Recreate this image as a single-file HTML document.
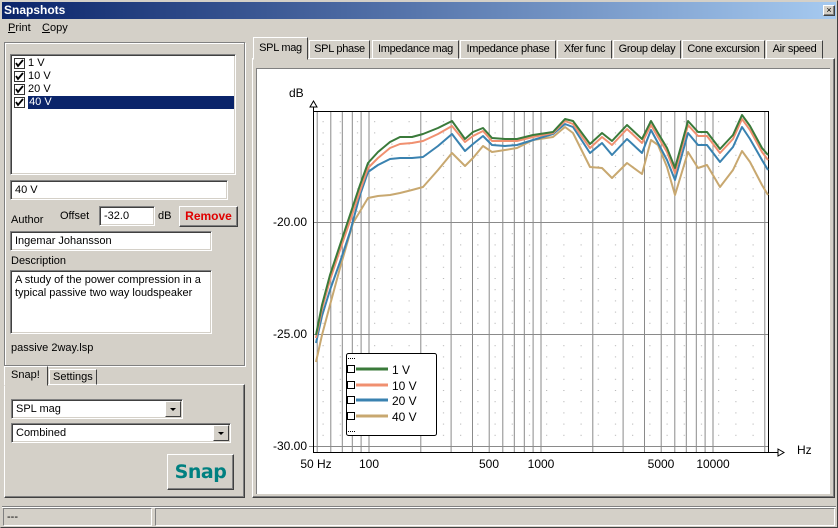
<!DOCTYPE html>
<html><head><meta charset="utf-8"><style>
*{box-sizing:border-box;margin:0;padding:0}
body{width:838px;height:528px;background:#d4d0c8;font-family:"Liberation Sans",sans-serif;font-size:11px;color:#000;position:relative;overflow:hidden}
.a{position:absolute}
.sunk{background:#fff;border:1px solid;border-color:#808080 #fff #fff #808080;box-shadow:inset 1px 1px 0 #404040,inset -1px -1px 0 #d4d0c8}
.raised{border:1px solid;border-color:#fff #404040 #404040 #fff;box-shadow:inset -1px -1px 0 #808080}
.grp{border:1px solid #808080;box-shadow:1px 1px 0 #fff,inset 1px 1px 0 #fff}
.cb{display:inline-block;width:11px;height:11px;border:1px solid #333;background:#fff;position:relative;vertical-align:middle}
.tab{position:absolute;top:40px;height:19px;border:1px solid;border-color:#fff #404040 transparent #fff;padding:2px 0 0;text-align:center;white-space:nowrap;font-size:11px;letter-spacing:-0.3px;overflow:hidden}
.dd{position:absolute;width:16px;height:16px;background:#d4d0c8;border:1px solid;border-color:#fff #404040 #404040 #fff;top:1px;right:1px}
.dd:after{content:"";position:absolute;left:4px;top:6px;border-left:3px solid transparent;border-right:3px solid transparent;border-top:3px solid #000}
</style></head><body>
<div class="a" style="left:0;top:0;width:838px;height:528px;border:1px solid;border-color:#d4d0c8 #404040 #404040 #d4d0c8"></div>
<div class="a" style="left:2px;top:2px;width:834px;height:17px;background:linear-gradient(90deg,#0a246a,#a6caf0)"></div>
<div class="a" style="left:4px;top:3px;color:#fff;font-weight:bold;font-size:12px">Snapshots</div>
<div class="a raised" style="left:823px;top:5px;width:12px;height:11px;background:#d4d0c8;font-size:9px;line-height:9px;text-align:center">×</div>
<div class="a" style="left:8px;top:22px"><u>P</u>rint</div>
<div class="a" style="left:42px;top:22px"><u>C</u>opy</div>

<div class="a grp" style="left:4px;top:42px;width:241px;height:324px"></div>
<div class="a sunk" style="left:10px;top:54px;width:226px;height:121px"></div>
<div class="a" style="left:14px;top:57px;line-height:13px">
<div><span class="cb"><svg width="9" height="9" style="position:absolute;left:0;top:0"><path d="M1 4l2 3 5-6" stroke="#000" stroke-width="1.8" fill="none"/></svg></span> 1 V</div>
<div><span class="cb"><svg width="9" height="9" style="position:absolute;left:0;top:0"><path d="M1 4l2 3 5-6" stroke="#000" stroke-width="1.8" fill="none"/></svg></span> 10 V</div>
<div><span class="cb"><svg width="9" height="9" style="position:absolute;left:0;top:0"><path d="M1 4l2 3 5-6" stroke="#000" stroke-width="1.8" fill="none"/></svg></span> 20 V</div>
<div><span class="cb"><svg width="9" height="9" style="position:absolute;left:0;top:0"><path d="M1 4l2 3 5-6" stroke="#000" stroke-width="1.8" fill="none"/></svg></span> <span style="background:#0a246a;color:#fff;display:inline-block;width:206px;padding-left:1px">40 V</span></div>
</div>
<div class="a sunk" style="left:10px;top:180px;width:218px;height:20px;padding:3px 4px">40 V</div>
<div class="a" style="left:11px;top:214px">Author</div>
<div class="a" style="left:60px;top:210px">Offset</div>
<div class="a sunk" style="left:99px;top:206px;width:56px;height:20px;padding:3px 4px">-32.0</div>
<div class="a" style="left:158px;top:210px">dB</div>
<div class="a raised" style="left:179px;top:206px;width:59px;height:21px;background:#d4d0c8;color:#e00000;font-weight:bold;font-size:12px;text-align:center;line-height:19px">Remove</div>
<div class="a sunk" style="left:10px;top:231px;width:202px;height:20px;padding:3px 4px">Ingemar Johansson</div>
<div class="a" style="left:11px;top:255px">Description</div>
<div class="a sunk" style="left:10px;top:270px;width:202px;height:64px;padding:3px 4px;line-height:13px">A study of the power compression in a typical passive two way loudspeaker</div>
<div class="a" style="left:11px;top:342px">passive 2way.lsp</div>

<div class="a raised" style="left:4px;top:384px;width:241px;height:114px;background:#d4d0c8"></div>
<div class="a" style="left:4px;top:366px;width:44px;height:20px;border:1px solid;border-color:#fff #404040 transparent #fff;background:#d4d0c8;padding:2px 6px">Snap!</div>
<div class="a" style="left:49px;top:369px;width:48px;height:16px;border:1px solid;border-color:#fff #404040 transparent #fff;padding:1px 3px">Settings</div>
<div class="a sunk" style="left:11px;top:399px;width:172px;height:20px;padding:3px 4px">SPL mag<span class="dd"></span></div>
<div class="a sunk" style="left:11px;top:423px;width:220px;height:20px;padding:3px 4px">Combined<span class="dd"></span></div>
<div class="a raised" style="left:167px;top:454px;width:67px;height:36px;background:#d4d0c8;color:#008080;font-weight:bold;font-size:19px;text-align:center;line-height:34px;font-family:'DejaVu Sans',sans-serif;letter-spacing:-0.5px">Snap</div>

<div class="a raised" style="left:252px;top:58px;width:583px;height:440px;background:#d4d0c8"></div>
<div class="a" style="left:256px;top:68px;width:574px;height:426px;background:#fff;border-top:1px solid #808080;border-left:1px solid #808080"></div>
<div class="tab" style="left:253px;top:37px;height:23px;width:55px;background:#d4d0c8;padding-top:4px">SPL mag</div>
<div class="tab" style="left:309px;width:61px">SPL phase</div>
<div class="tab" style="left:372px;width:87px">Impedance mag</div>
<div class="tab" style="left:460px;width:96px">Impedance phase</div>
<div class="tab" style="left:557px;width:55px">Xfer func</div>
<div class="tab" style="left:613px;width:68px">Group delay</div>
<div class="tab" style="left:682px;width:83px">Cone excursion</div>
<div class="tab" style="left:766px;width:57px">Air speed</div>

<svg class="a" style="left:0;top:0" width="838" height="528" font-family="Liberation Sans, sans-serif" font-size="12">
<defs><pattern id="dp" x="5" y="222" width="17.2" height="11.2" patternUnits="userSpaceOnUse"><rect x="8" y="0" width="1" height="1" fill="#aaa"/></pattern></defs>
<rect x="313" y="111" width="455" height="341" fill="url(#dp)"/>
<g stroke="#8a8a8a" stroke-width="1">
<path d="M317.2 111V452M330.8 111V452M342.3 111V452M352.3 111V452M361.1 111V452M369 111V452M420.8 111V452M451.1 111V452M472.5 111V452M489.2 111V452M502.8 111V452M514.3 111V452M524.3 111V452M533.1 111V452M541 111V452M592.8 111V452M623.1 111V452M644.5 111V452M661.2 111V452M674.8 111V452M686.3 111V452M696.3 111V452M705.1 111V452M713 111V452M764.8 111V452"/>
<path d="M313 222.5H768M313 334.5H768M309 446.5H768"/>
</g>
<path d="M313.5 103V452.5H780M313 111.5H768.5V452" stroke="#000" fill="none"/>
<path d="M310 107l3.5-6 3.5 6z" fill="#fff" stroke="#000"/>
<path d="M778 449l6 3.5-6 3.5z" fill="#fff" stroke="#000"/>
<g fill="none" stroke-width="2" stroke-linejoin="round">
<polyline stroke="#c8a870" points="316,362 322,335 330,305 340,268 353,223 368,198 378,196 390,195 400,193 412,190 423,187 438,170 452,153 465,166 473,158 483,146 492,152 505,150 517,148 533,140 553,137 565,127 573,133 590,167 602,168 612,178 627,163 642,174 651,140 658,145 667,167 675,195 688,152 698,168 707,165 720,187 733,170 742,151 750,162 762,185 768,195"/>
<polyline stroke="#3a82b0" points="316,343 322,316 330,290 340,262 350,232 360,195 368,172 378,165 390,159 400,158 412,158 423,157 438,146 452,134 465,151 473,144 483,136 492,145 505,146 517,145 533,140 553,134 565,124 573,127 590,153 602,143 612,155 627,139 642,153 651,130 658,143 667,160 675,180 688,133 698,145 707,145 720,162 733,147 742,127 750,139 762,160 768,170"/>
<polyline stroke="#f09070" points="316,338 322,309 330,280 340,250 350,221 360,191 368,168 378,158 390,148 400,144 412,143 423,141 438,134 452,126 465,142 473,136 483,131 492,141 505,141 517,141 533,137 553,133 565,121 573,124 590,148 602,137 612,145 627,129 642,143 651,125 658,137 667,152 675,173 688,125 698,136 707,136 720,153 733,139 742,119 750,130 762,152 768,160"/>
<polyline stroke="#3a7a3a" points="316,335 322,305 330,275 340,245 350,215 360,185 368,163 378,152 390,142 400,137 412,137 423,134 438,128 452,121 465,139 473,132 483,128 492,138 505,139 517,139 533,135 553,132 565,119 573,121 590,144 602,133 612,141 627,125 642,139 651,121 658,133 667,148 675,168 688,121 698,132 707,132 720,149 733,135 742,115 750,126 762,148 768,155"/>
</g>
<rect x="346.5" y="353.5" width="90" height="82" rx="2" fill="#fff" stroke="#000"/>
<g stroke-width="3"><path d="M356 369H388" stroke="#3a7a3a"/><path d="M356 385H388" stroke="#f09070"/><path d="M356 400H388" stroke="#3a82b0"/><path d="M356 416H388" stroke="#c8a870"/></g>
<g fill="#fff" stroke="#000"><rect x="347.5" y="365.5" width="7" height="7"/><rect x="347.5" y="381.5" width="7" height="7"/><rect x="347.5" y="396.5" width="7" height="7"/><rect x="347.5" y="412.5" width="7" height="7"/></g>
<text x="392" y="374">1 V</text><text x="392" y="390">10 V</text><text x="392" y="405">20 V</text><text x="392" y="421">40 V</text>
<path d="M348 358.5h8M348 431.5h8" stroke="#000" stroke-dasharray="1,1"/>
<text x="289" y="97">dB</text>
<text x="307" y="226" text-anchor="end">-20.00</text>
<text x="307" y="338" text-anchor="end">-25.00</text>
<text x="307" y="450" text-anchor="end">-30.00</text>
<text x="797" y="454">Hz</text>
<text x="316" y="468" text-anchor="middle">50 Hz</text>
<text x="369" y="468" text-anchor="middle">100</text>
<text x="489" y="468" text-anchor="middle">500</text>
<text x="541" y="468" text-anchor="middle">1000</text>
<text x="661" y="468" text-anchor="middle">5000</text>
<text x="713" y="468" text-anchor="middle">10000</text>
</svg>

<div class="a" style="left:2px;top:506px;width:834px;height:1px;background:#808080"></div>
<div class="a" style="left:2px;top:507px;width:834px;height:1px;background:#fff"></div>
<div class="a" style="left:3px;top:508px;width:149px;height:18px;border:1px solid;border-color:#808080 #fff #fff #808080;padding:2px 3px">---</div>
<div class="a" style="left:155px;top:508px;width:680px;height:18px;border:1px solid;border-color:#808080 #fff #fff #808080"></div>
</body></html>
